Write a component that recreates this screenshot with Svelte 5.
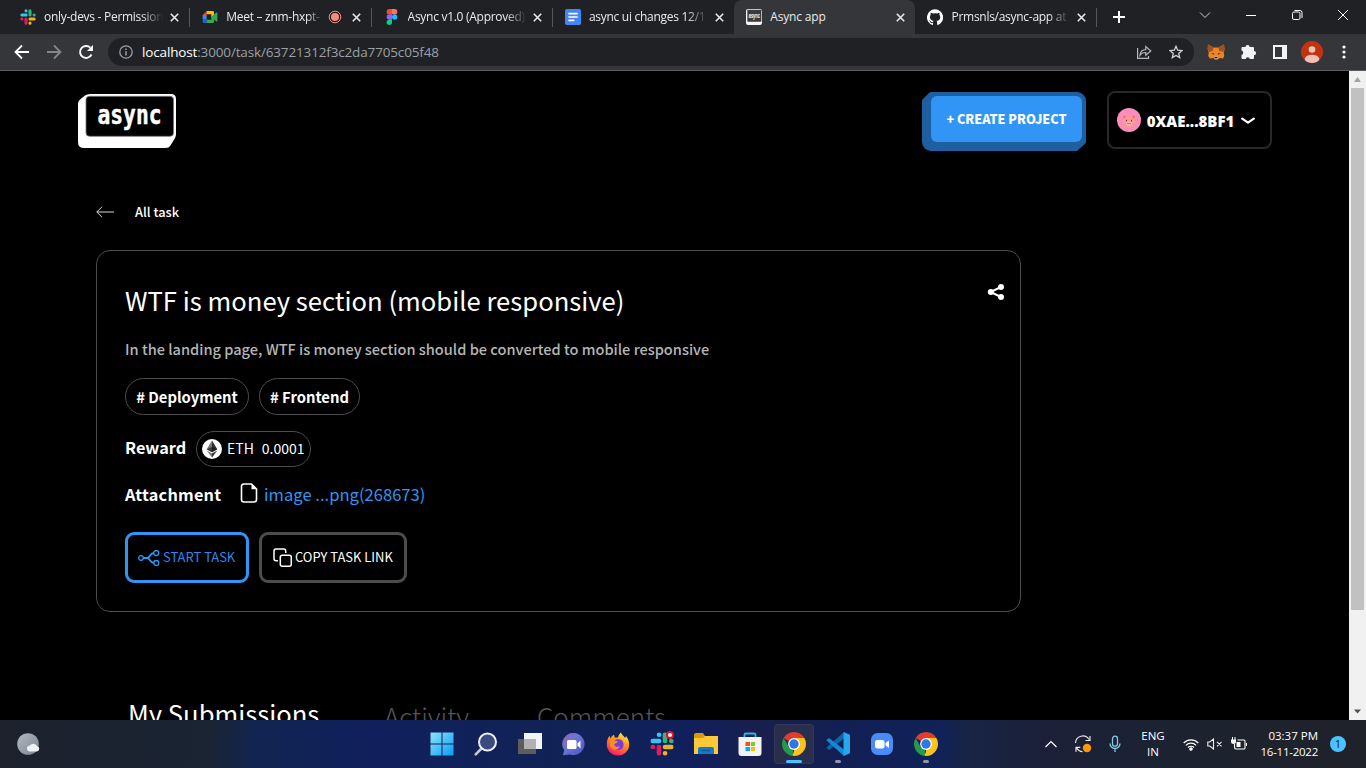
<script>
  const tabs = [
    { icon: 'slack', title: 'only-devs - Permission' },
    { icon: 'meet', title: 'Meet – znm-hxpt-', rec: true },
    { icon: 'figma', title: 'Async v1.0 (Approved)' },
    { icon: 'docs', title: 'async ui changes 12/1' },
    { icon: 'async', title: 'Async app', active: true },
    { icon: 'github', title: 'Prmsnls/async-app at' }
  ];
  const apps = ['windows', 'search', 'taskview', 'chat', 'firefox', 'slack', 'folder', 'store', 'chrome', 'vscode', 'zoom', 'chrome'];
  const state = { 8: 'current', 9: 'open', 11: 'open' };
</script>

{#snippet icon(name, size)}
  <svg width={size} height={size} viewBox="0 0 24 24" fill="none">
    {#if name === 'slack'}
      <g stroke-width="4.6" stroke-linecap="round">
        <path d="M9 2.8h.1M2.8 9h6.3" stroke="#36c5f0" />
        <path d="M15 2.8V9M21.2 9h.1" stroke="#2eb67d" />
        <path d="M15 21.2h.1M15 15h6.2" stroke="#ecb22e" />
        <path d="M9 15v6.2M2.8 15h.1" stroke="#e01e5a" />
      </g>
    {:else if name === 'meet'}
      <path d="M1 9 7 3v6z" fill="#ea4335" />
      <path d="M7 3h9a2 2 0 0 1 2 2v5l-4 3V8H7z" fill="#fbbc04" />
      <path d="M1 9h6v7H1z" fill="#4285f4" />
      <path d="M1 16h6v5H3a2 2 0 0 1-2-2z" fill="#1967d2" />
      <path d="M7 16h7v-4l4-2v9a2 2 0 0 1-2 2H7zM14 12l7-6.5q2-1.2 2 .8v11.4q0 2-2 .8z" fill="#34a853" />
    {:else if name === 'figma'}
      <path d="M12 0H8a4 4 0 0 0 0 8h4z" fill="#f24e1e" />
      <path d="M12 0h4a4 4 0 0 1 0 8h-4z" fill="#ff7262" />
      <path d="M12 8H8a4 4 0 0 0 0 8h4z" fill="#a259ff" />
      <circle cx="16" cy="12" r="4" fill="#1abcfe" />
      <path d="M12 16H8a4 4 0 1 0 4 4z" fill="#0acf83" />
    {:else if name === 'docs'}
      <rect width="24" height="24" rx="2.5" fill="#4285f4" />
      <path d="M5 7h14M5 12h14M5 17h9" stroke="#fff" stroke-width="2.4" />
    {:else if name === 'async'}
      <rect x="0" y="0" width="24" height="24" rx="3" fill="#f5f5f5" />
      <rect x="2" y="1" width="21" height="18" rx="1" fill="#3a3a3d" />
      <text x="12.5" y="13.5" text-anchor="middle" textLength="17" lengthAdjust="spacingAndGlyphs" font-family="Liberation Sans" font-weight="700" font-size="10" fill="#fff">async</text>
    {:else if name === 'github'}
      <path fill="#fff" d="M12 .5a12 12 0 0 0-3.8 23.4c.6.1.8-.3.8-.6v-2.2c-3.3.7-4-1.4-4-1.4-.6-1.4-1.4-1.8-1.4-1.8-1-.7.1-.7.1-.7 1.2.1 1.9 1.2 1.9 1.2 1 1.8 2.8 1.3 3.5 1 .1-.8.4-1.3.8-1.6-2.7-.3-5.5-1.3-5.5-6 0-1.200.5-2.300 1.300-3.100-.2-.4-.6-1.600 0-3.200 0 0 1-.3 3.400 1.200a11.500 11.500 0 0 1 6 0c2.300-1.500 3.300-1.200 3.300-1.200.7 1.600.2 2.800.1 3.200.8.8 1.300 1.900 1.300 3.200 0 4.600-2.800 5.600-5.500 5.900.5.4.9 1.100.9 2.200v3.300c0 .3.200.7.8.6A12 12 0 0 0 12 .5z" />
    {:else if name === 'windows'}
      <defs><linearGradient id="wg" x1="0" y1="0" x2="1" y2="1"><stop stop-color="#8be4fb" /><stop offset="1" stop-color="#0a9cf5" /></linearGradient></defs>
      <path fill="url(#wg)" d="M.5.5h11v11H.5zM12.500.5h11v11h-11zM.5 12.500h11v11H.5zM12.500 12.500h11v11h-11z" />
    {:else if name === 'search'}
      <path d="m7.500 16.500-5.800 5.800" stroke="#c3cad6" stroke-width="2.600" stroke-linecap="round" />
      <circle cx="13.500" cy="10" r="8.500" fill="#3d4a80" stroke="#eceff3" stroke-width="2" />
    {:else if name === 'taskview'}
      <rect x="0" y="7" width="18" height="15" fill="#5d5d60" />
      <rect x="6" y="1" width="18" height="16" fill="#f4f4f4" />
      <rect x="6" y="7" width="12" height="10" fill="#b2b2b4" />
    {:else if name === 'chat'}
      <defs><linearGradient id="cg" x1="0" y1="0" x2="1" y2="1"><stop stop-color="#9c5fa8" /><stop offset=".4" stop-color="#6b76d4" /><stop offset="1" stop-color="#4f52c4" /></linearGradient></defs>
      <path d="M12 1a11 11 0 1 1-4 21.400L.8 23.300l1.500-5A11 11 0 0 1 12 1z" fill="url(#cg)" />
      <rect x="5" y="8" width="9.500" height="9" rx="1.500" fill="#fff" /><path d="m15.500 11.500 3-3v8l-3-3z" fill="#fff" />
    {:else if name === 'firefox'}
      <defs>
        <linearGradient id="fg" x1=".8" y1="0" x2=".3" y2="1"><stop stop-color="#fff44f" /><stop offset=".4" stop-color="#ff9a20" /><stop offset="1" stop-color="#f5156c" /></linearGradient>
      </defs>
      <path d="M12 23.500C5.500 23.500.8 18.500.8 12.500c0-3.500 1-6.500 2.700-8.700l1 2.700C5.500 4.800 6.200 3.500 8 2.800l.8 3 3.200-.3c.5-2 1.500-4 3-5 .8 2.500 3 3.500 4.200 5.500l.8-2c2 2.500 3.200 5 3.200 8.500 0 6-4.700 11-11.200 11z" fill="url(#fg)" />
      <circle cx="12" cy="12.500" r="5.600" fill="#7a3ce0" />
      <path d="M4 9c3-2 5-1 8 .5-1 2-3 1.500-4 3 1 2.500 4 3 6 1.500-1.500 4.500-7 5-9.500 1C3.500 13 3.500 11 4 9z" fill="#ff8a1e" />
    {:else if name === 'folder'}
      <path d="M0 3q0-2 2-2h7l2 3v4H0z" fill="#d99a0a" />
      <path d="M0 6h9l2-2h13v18H0z" fill="#fcc938" />
      <path d="M4 22v-5q0-2 2-2h12q2 0 2 2v5z" fill="#1579c8" /><path d="M8 18.500h8" stroke="#0b5794" stroke-width="1.200" />
    {:else if name === 'store'}
      <path d="M6.500 6V2.500Q6.500 1.500 8 1.500h8q1.500 0 1.500 1V6" stroke="#2bb5ee" stroke-width="1.800" />
      <path d="M.5 5h23v16q0 3-3 3h-17q-3 0-3-3z" fill="#f3f3f3" />
      <path d="M7.500 10H12v4H7.500z" fill="#f1511b" /><path d="M12.800 10H17v4h-4.200z" fill="#80cc28" /><path d="M7.500 15H12v4H7.500z" fill="#00adef" /><path d="M12.800 15H17v4h-4.200z" fill="#fbbc09" />
    {:else if name === 'chrome'}
      <path d="M12 12 1.610 6A12 12 0 0 1 22.390 6z" fill="#e33b2e" />
      <path d="M12 12V6h10.390A12 12 0 0 1 12 24z" fill="#fcc31e" />
      <path d="M1.610 6 6.800 15l4 2.800L12 24A12 12 0 0 1 1.610 6z" fill="#269a4b" />
      <path d="m17.200 15-5.200 9-1.500-1L14 16z" fill="#fcc31e" />
      <circle cx="12" cy="12" r="5.900" fill="#fff" /><circle cx="12" cy="12" r="4.700" fill="#2b78e8" />
    {:else if name === 'vscode'}
      <path d="M18 0v6.500L3 18 .3 15.700z" fill="#0b67ad" />
      <path d="M18 24v-6.500L3 6 .3 8.300z" fill="#1389d3" />
      <path d="m17.500 0 6.500 2.700v18.600L17.500 24z" fill="#27a5ee" />
    {:else if name === 'zoom'}
      <rect x="1" y="1" width="22" height="22" rx="6.500" fill="#4a8cf7" />
      <rect x="5" y="8" width="9.500" height="8.500" rx="2.200" fill="#fff" /><path d="m15.500 11 3.500-2.500v7.500l-3.500-2.500z" fill="#fff" />
    {/if}
  </svg>
{/snippet}

{#snippet cross()}
  <svg class="x" width="9" height="9" viewBox="0 0 9 9"><path d="m.8.8 7.400 7.400M8.200.8.8 8.200" stroke="#e8eaed" stroke-width="1.600" /></svg>
{/snippet}

<div class="screen">
  <div class="tabstrip">
    {#each tabs as t}
      <div class="tab" class:active={t.active}>
        {@render icon(t.icon, 16)}
        <span class="tabtitle" class:plain={t.active}>{t.title}</span>
        {#if t.rec}
          <svg class="rec" width="14" height="14" viewBox="0 0 14 14" fill="none"><circle cx="7" cy="7" r="5.800" stroke="#f28b82" stroke-width="1" /><circle cx="7" cy="7" r="4" fill="#f28b82" /></svg>
        {/if}
        {@render cross()}
      </div>
    {/each}
    <svg class="plus" width="12" height="12" viewBox="0 0 12 12"><path d="M6 0v12M0 6h12" stroke="#fff" stroke-width="2" /></svg>
    <div class="winctl">
      <svg width="12" height="12" viewBox="0 0 12 12" fill="none" stroke="#d0d0d2"><path d="m1 3.500 5 5 5-5" /></svg>
      <svg width="12" height="12" viewBox="0 0 12 12" stroke="#fff"><path d="M1 6.500h10" /></svg>
      <svg width="12" height="12" viewBox="0 0 12 12" fill="none" stroke="#fff"><rect x="1.500" y="3" width="7.500" height="7.500" rx="1.500" /><path d="M3.500 1.500H9Q11 1.500 11 3.500V9" /></svg>
      <svg width="12" height="12" viewBox="0 0 12 12" stroke="#fff"><path d="m1 1 10 10M11 1 1 11" /></svg>
    </div>
  </div>

  <div class="toolbar">
    <svg width="16" height="16" viewBox="0 0 16 16" fill="none" stroke="#fff" stroke-width="1.800"><path d="M15 8H2M8 1.500 1.500 8 8 14.500" /></svg>
    <svg width="16" height="16" viewBox="0 0 16 16" fill="none" stroke="#85868a" stroke-width="1.800"><path d="M1 8h13M8 1.500 14.500 8 8 14.500" /></svg>
    <svg width="16" height="16" viewBox="0 0 16 16" fill="none"><path d="M13.500 10.500A6 6 0 1 1 12.300 3.700" stroke="#fff" stroke-width="1.900" /><path d="M15 1v6H9z" fill="#fff" /></svg>
    <div class="omnibox">
      <svg width="14" height="14" viewBox="0 0 14 14" fill="none" stroke="#9aa0a6" stroke-width="1.300"><circle cx="7" cy="7" r="6.200" /><path d="M7 6.200v4.300M7 3.500v1.400" stroke-width="1.500" /></svg>
      <span class="url"><b>localhost</b>:3000/task/63721312f3c2da7705c05f48</span>
      <svg class="share" width="16" height="16" viewBox="0 0 16 16" fill="none" stroke="#b5b8bc" stroke-width="1.200"><path d="M1.600 4v10.400H12.500V12M4 11.200c.4-3.600 2.500-5.400 5.800-5.500V2.500L14.800 7 9.800 11.300V8.500C7.500 8.400 5.600 9 4 11.200z" /></svg>
      <svg width="14" height="14" viewBox="0 0 14 14" fill="none" stroke="#cfd1d4" stroke-width="1.300"><path d="m7 1.300 1.700 3.900 4.200.4-3.200 2.800 1 4.200L7 10.400l-3.700 2.200 1-4.200L1.100 5.600l4.200-.4z" /></svg>
    </div>
    <div class="exts">
      <svg width="18" height="16" viewBox="0 0 18 16"><path d="m1 .5 5.500 3h5l5.500-3 .5 5-.8 3.500.6 3-1.300 2.500-3.500-.5-1.600 1.500H8.100l-1.600-1.500-3.500.5L1.200 12l.6-3L.8 5.500z" fill="#ee8422" /><path d="m1 .5 5.500 3-.8 3.500-3.900 1L.5 5zM17 .5l-5.500 3 .8 3.500 3.900 1L17.500 5z" fill="#9c5322" /><path d="m4.500 9 2.800.3-.8 1.500zM13.500 9l-2.800.3.8 1.500z" fill="#233447" /><path d="m7 13.200.6-.7h2.800l.6.7-.4 2H7.400z" fill="#c0ad9e" /><path d="M7.700 13h2.600v1.200H7.700z" fill="#161616" /></svg>
      <svg width="16" height="16" viewBox="0 0 16 16"><path d="M4.500 3a2 2 0 0 1 4.200 0H12q1 0 1 1v3.100a2 2 0 0 1 0 4.200V14q0 1-1 1H8.900a2.200 2.200 0 0 0-4.300 0H1.500q-1 0-1-1v-3.100a2.200 2.200 0 0 0 0-4.300V4q0-1 1-1z" fill="#f1f3f4" /></svg>
      <svg width="14" height="14" viewBox="0 0 14 14"><path fill-rule="evenodd" d="M0 0h14v14H0zM2 2v10h7V2z" fill="#f1f3f4" /></svg>
      <svg width="22" height="22" viewBox="0 0 22 22"><defs><clipPath id="av"><circle cx="11" cy="11" r="11" /></clipPath></defs><g clip-path="url(#av)"><rect width="22" height="22" fill="#c1340f" /><circle cx="11" cy="8.500" r="3.300" fill="#ecc2b6" /><ellipse cx="11" cy="18" rx="7.300" ry="4.300" fill="#ecc2b6" /></g></svg>
      <svg width="4" height="14" viewBox="0 0 4 14" fill="#fff"><circle cx="2" cy="2" r="1.600" /><circle cx="2" cy="7" r="1.600" /><circle cx="2" cy="12" r="1.600" /></svg>
    </div>
  </div>

  <div class="viewport">
    <main class="page">
      <header>
        <svg class="logo" width="98" height="54" viewBox="0 0 98 54">
          <path d="M12 0h81q5 0 5 5v35q0 2-1 4l-4.500 7.500Q91 54 87.500 54H6q-6 0-6-6V10q0-3 2-4.500L7 1.500Q9 0 12 0z" fill="#fff" />
          <rect x="8" y="2.300" width="87.500" height="40" rx="3.500" fill="#000" stroke="#777" stroke-width=".8" />
          <text x="19.500" y="30" textLength="64" lengthAdjust="spacingAndGlyphs" font-family="DejaVu Sans Mono" font-weight="700" font-size="26" fill="#fff" stroke="#fff" stroke-width=".5" stroke-linejoin="round">async</text>
        </svg>
        <button class="create"><span>+ CREATE PROJECT</span></button>
        <button class="wallet">
          <svg width="24" height="24" viewBox="0 0 24 24"><circle cx="12" cy="12" r="12" fill="#fd8cba" /><path d="m6 7.500 4 .8h4l4-.8.300 3-1 6q-2 3-5.300 3t-5.300-3l-1-6z" fill="#fa9a95" /><path d="m6 7.500 3.500 1L6.500 11zM18 7.500l-3.500 1 3 2.500z" fill="#e8776f" /><ellipse cx="12" cy="15.500" rx="2.800" ry="2" fill="#ffb8ac" /><path d="M9.500 11.800v1.600M14.500 11.800v1.600M11 15v1M13 15v1" stroke="#7b2f3a" stroke-width="1" /></svg>
          <span>0XAE...8BF1</span>
          <svg class="caret" width="14" height="8" viewBox="0 0 14 8" fill="none"><path d="m1.200 1.700 5.800 4 5.800-4" stroke="#fff" stroke-width="2.200" stroke-linecap="round" stroke-linejoin="round" /></svg>
        </button>
      </header>

      <div class="back">
        <svg width="18" height="12" viewBox="0 0 18 12" fill="none" stroke="#d8d8d8"><path d="M18 6H.8M6 .8.8 6 6 11.200" /></svg>
        <span>All task</span>
      </div>

      <section class="card">
        <div class="headline">
          <h1>WTF is money section (mobile responsive)</h1>
          <svg width="18" height="18" viewBox="0 0 18 18" fill="#fff"><path d="m14 4-10.500 5 10.500 5" fill="none" stroke="#fff" stroke-width="2" /><circle cx="14" cy="4" r="3" /><circle cx="3.800" cy="9" r="3" /><circle cx="14" cy="14" r="3" /></svg>
        </div>
        <p>In the landing page, WTF is money section should be converted to mobile responsive</p>
        <div class="tags"><span class="t1">#&nbsp;Deployment</span><span class="t2">#&nbsp;Frontend</span></div>
        <div class="reward">
          <strong>Reward</strong>
          <div class="pill">
            <svg width="20" height="20" viewBox="0 0 20 20"><circle cx="10" cy="10" r="10" fill="#fff" /><path d="m10 1.500-5.300 8.700L10 13.300z" fill="#777" /><path d="m10 1.500 5.300 8.700-5.300 3.100z" fill="#303030" /><path d="m4.700 11.400 5.300 7.200v-4.200z" fill="#777" /><path d="m15.300 11.400-5.300 7.200v-4.200z" fill="#303030" /><path d="m10 8-5.300 2.300L10 13.300l5.300-3z" fill="#171717" opacity=".65" /></svg>
            <span>ETH</span><span class="amount">0.0001</span>
          </div>
        </div>
        <div class="attachment">
          <strong>Attachment</strong>
          <svg width="18" height="20" viewBox="0 0 18 20" fill="none"><path d="M11.500 1H4Q1.500 1 1.500 3.500v13Q1.500 19 4 19h10q2.500 0 2.500-2.500V6z" stroke="#fff" stroke-width="1.600" stroke-linejoin="round" /><path d="M11.500 1 16.500 6.300h-5z" fill="#fff" /></svg>
          <a href="#file">image ...png(268673)</a>
        </div>
        <div class="actions">
          <button class="start">
            <svg width="22" height="16" viewBox="0 0 22 16" fill="none" stroke="#3197f6" stroke-width="1.300"><circle cx="3" cy="8" r="2.300" /><circle cx="18.300" cy="3" r="2.500" /><circle cx="18.300" cy="13" r="2.500" /><path d="M5.300 8h4c2.500 0 3-5 6.500-5M9.300 8c2.500 0 3 5 6.500 5" stroke-width="1.800" /></svg>
            <span>START TASK</span>
          </button>
          <button class="copy">
            <svg width="20" height="20" viewBox="0 0 20 20" fill="none" stroke="#fff" stroke-width="1.500"><rect x="7.300" y="7.300" width="11" height="11" rx="2" /><path d="M5 12.700H3Q1 12.700 1 10.700V3q0-2 2-2h7.700q2 0 2 2v2" /></svg>
            <span>COPY TASK LINK</span>
          </button>
        </div>
      </section>

      <nav>
        <span class="mine">My Submissions</span><span class="act">Activity</span><span class="com">Comments</span>
      </nav>
    </main>
    <div class="scroll">
      <svg width="17" height="17" viewBox="0 0 17 17"><path d="m8.500 6 3.500 5H5z" fill="#a3a3a3" /></svg>
      <div class="thumb"></div>
      <svg width="17" height="17" viewBox="0 0 17 17"><path d="m8.500 10.500 3.500-4H5z" fill="#505050" /></svg>
    </div>
  </div>

  <footer>
    <svg class="weather" width="24" height="24" viewBox="0 0 24 24"><defs><linearGradient id="mn" x1="0" y1="0" x2="1" y2="1"><stop stop-color="#b3bac4" /><stop offset="1" stop-color="#7b8490" /></linearGradient></defs><circle cx="11" cy="12" r="10.800" fill="url(#mn)" /><path d="M13 19.500a3 3 0 0 1 0-6 4 4 0 0 1 7 .5 2.800 2.800 0 0 1 0 5.500z" fill="#eef1f5" /></svg>
    <div class="apps">
      {#each apps as a, i}
        <div class="app {state[i] ?? ''}">
          {@render icon(a, 24)}
          {#if i === 5}<i class="dot"></i>{/if}
        </div>
      {/each}
    </div>
    <div class="tray">
      <svg class="up" width="12" height="8" viewBox="0 0 12 8" fill="none" stroke="#fff" stroke-width="1.200"><path d="m.5 7 5.500-5.500L11.500 7" /></svg>
      <svg class="sync" width="18" height="18" viewBox="0 0 18 18" fill="none" stroke="#e6e6e6" stroke-width="1.200"><path d="M1.500 8A7.300 7.300 0 0 1 15 4.500M16 1v4.500h-4.500M2 16.800v-4.500h4.300M2.500 12.500q2 4 6 4.200" /><circle cx="13" cy="13" r="4.200" fill="#ff9808" stroke="none" /></svg>
      <svg class="mic" width="12" height="18" viewBox="0 0 12 18" fill="none" stroke="#7dcde0" stroke-width="1.300"><rect x="3.500" y="1.200" width="5" height="10" rx="2.500" /><path d="M1 8.500a5 5 0 0 0 10 0M6 13.500V17" /></svg>
      <div class="lang"><span>ENG</span><span>IN</span></div>
      <svg class="wifi" width="16" height="13" viewBox="0 0 16 13" fill="none" stroke="#fff" stroke-width="1.200"><path d="M.7 5a10 10 0 0 1 14.600 0M2.900 7.300a7 7 0 0 1 10.200 0M5 9.500a4.200 4.200 0 0 1 6 0" /><circle cx="8" cy="11" r="1.200" fill="#fff" /></svg>
      <svg class="spk" width="16" height="12" viewBox="0 0 16 12" fill="none" stroke="#eee" stroke-width="1.100"><path d="M.8 4v4h2L6.500 11V1L2.800 4zM10 3.800l4.500 4.500M14.500 3.800 10 8.300" /></svg>
      <svg class="bat" width="16" height="14" viewBox="0 0 16 14" fill="none" stroke="#fff" stroke-width="1.100"><path d="M6.500 3H13Q14 3 14 4v7q0 1-1 1H5q-1.500 0-1.500-2V7" /><path d="M15.500 6v3" /><path d="M5.500 5h4v5h-4z" fill="#fff" stroke="none" /><path d="M0 2.500h5V5Q5 7 2.500 7T0 5zM1 0h1v2.500H1zM3.500 0h1v2.500h-1z" fill="#fff" stroke="none" /></svg>
      <div class="clock"><span>03:37 PM</span><span class="date">16-11-2022</span></div>
      <span class="badge">1</span>
    </div>
  </footer>
</div>

<style>
  :global(body) { margin: 0; background: #000; overflow: hidden; }
  .screen { width: 1366px; height: 768px; display: flex; flex-direction: column; overflow: hidden; background: #000; font-family: "Open Sans", sans-serif; color: #fff; }
  svg { display: block; flex: none; }
  span, strong, a, h1, p { white-space: nowrap; }
  button { font: inherit; color: inherit; background: none; border: 0; padding: 0; margin: 0; box-sizing: border-box; }

  .tabstrip { height: 34px; flex: none; box-sizing: border-box; background: #202124; display: flex; align-items: center; padding-left: 9px; }
  .tab { width: 181.3px; height: 34px; box-sizing: border-box; padding: 0 11px; display: flex; align-items: center; position: relative; flex: none; }
  .tab:nth-child(n+2) { padding-left: 12px; padding-right: 10.500px; }
  .tab::after { content: ""; position: absolute; right: 0; top: 8px; width: 1px; height: 19px; background: #54565a; }
  .tab:nth-child(4)::after, .active::after { display: none; }
  .active { background: #35363a; border-radius: 8px 8px 0 0; }
  .tabtitle { margin-left: 8px; width: 119px; flex: 0 1 119px; overflow: hidden; font-size: 12px; letter-spacing: -0.28px; color: #e8eaed; line-height: 18px; mask-image: linear-gradient(90deg, #000 82%, transparent); }
  .plain { mask-image: none; letter-spacing: -0.15px; }
  .rec { margin: 0 10px 0 4px; }
  .x { margin-left: auto; }
  .plus { margin-left: 16px; }
  .winctl { margin-left: auto; display: flex; gap: 34px; padding-right: 17px; margin-top: -5px; }

  .toolbar { height: 37px; flex: none; box-sizing: border-box; background: #35363a; border-bottom: 1px solid #5b5c60; display: flex; align-items: center; padding-left: 14px; gap: 16px; }
  .omnibox { margin-left: -2px; width: 1086px; height: 28px; border-radius: 14px; background: #202124; display: flex; align-items: center; padding: 0 11px; box-sizing: border-box; flex: none; }
  .url { margin-left: 9px; font-size: 13.500px; letter-spacing: -0.15px; color: #9aa0a6; }
  .url b { font-weight: 400; color: #fff; }
  .share { margin-left: auto; margin-right: 17px; }
  .exts { display: flex; align-items: center; gap: 16px; margin-left: -3px; }
  .exts svg:nth-child(4) { margin-left: -2px; }
  .exts svg:nth-child(5) { margin-left: 3px; }

  .viewport { height: 649px; flex: none; display: flex; overflow: hidden; }
  .page { width: 1349px; box-sizing: border-box; font-family: "Noto Sans CJK SC", sans-serif; overflow: hidden; }
  header { display: flex; align-items: flex-start; padding: 20px 77px 0 78px; }
  .logo { margin-top: 3px; }
  .create { display: flex; align-items: flex-start; margin: 1px 0 0 auto; width: 164px; height: 59px; background: #1d5fa0; border-radius: 9px; clip-path: polygon(8px 0, 100% 0, 100% 51px, 155px 100%, 0 100%, 0 8px); padding: 4px 4px 0 9px; }
  .create span { flex: 1; display: flex; align-items: center; justify-content: center; height: 46px; border-radius: 6px; background: #3095f4; font-weight: 900; font-size: 12.600px; line-height: 18px; box-sizing: border-box; padding-bottom: 1px; }
  .wallet { margin-left: 21px; width: 165px; height: 58px; border: 2px solid #27272c; border-radius: 8px; display: flex; align-items: center; padding-left: 8px; }
  .wallet span { font-family: "Open Sans", sans-serif; font-weight: 800; font-size: 15px; margin: 2px 6px 0 5px; width: 89px; }
  .caret { margin-top: 2px; }
  .back { display: flex; align-items: center; gap: 21px; padding: 51px 0 0 96px; height: 20px; font-size: 12.800px; line-height: 20px; font-weight: 500; }
  .card { margin: 28px 0 0 96px; width: 925px; height: 362px; box-sizing: border-box; border: 1px solid #4c4c4c; border-radius: 14px; padding: 29px 15px 0 28px; }
  .headline { display: flex; justify-content: space-between; }
  .headline svg { margin-top: 3px; }
  h1 { margin: 0; font-size: 25.630px; font-weight: 400; line-height: 40px; }
  p { margin: 18px 0 0; font-size: 14.580px; line-height: 22px; font-weight: 500; color: #b5b5b5; }
  .tags { display: flex; gap: 10px; margin-top: 18px; }
  .tags span { height: 37px; box-sizing: border-box; border: 1px solid #4c4c4c; border-radius: 19px; display: flex; align-items: center; justify-content: center; font-size: 14.800px; font-weight: 700; padding-bottom: 1px; }
  .t1 { width: 124px; }
  .t2 { width: 101px; }
  .reward { display: flex; align-items: center; margin-top: 16px; height: 36px; }
  strong { font-size: 16.300px; line-height: 28px; font-weight: 700; }
  .reward strong { width: 71px; margin-top: -4px; }
  .pill { width: 115px; height: 36px; box-sizing: border-box; border: 1px solid #4c4c4c; border-radius: 18px; display: flex; align-items: center; padding-left: 5px; font-size: 14px; }
  .pill span { margin: -3px 0 0 5px; }
  .pill .amount { margin-left: 8px; }
  .attachment { display: flex; align-items: center; margin-top: 13px; height: 28px; }
  .attachment strong { width: 115px; letter-spacing: 0.22px; }
  .attachment svg { margin-top: -2px; }
  a { margin-left: 6px; color: #3095f4; text-decoration: none; font-size: 16.600px; line-height: 28px; }
  .actions { display: flex; gap: 10px; margin-top: 24px; }
  .actions button { height: 51px; border: 3px solid #4c4c4c; border-radius: 9px; display: flex; align-items: center; font-size: 12.950px; padding-left: 10px; }
  .actions span { margin-top: -2px; }
  .actions .start { width: 124px; border-color: #3095f4; color: #2f86f0; }
  .start span { margin-left: 3px; }
  .actions .copy { width: 148px; padding-left: 11px; }
  .copy span { margin-left: 2px; }
  nav { display: flex; padding: 85px 0 0 128px; line-height: 32px; align-items: flex-start; }
  .mine { width: 257px; font-size: 25.600px; }
  .act, .com { font-size: 26px; font-weight: 300; color: #55565a; margin-top: 3px; }
  .act { width: 152px; margin-left: -1px; margin-right: 1px; }

  .scroll { width: 17px; background: #f1f1f1; display: flex; flex-direction: column; }
  .thumb { flex: none; height: 522px; margin: 0 2px auto; background: #c1c1c1; }

  footer { height: 48px; flex: none; box-sizing: border-box; display: flex; align-items: center; padding-left: 17px; background: linear-gradient(90deg, #1d222d 0, #1a2433 210px, #122551 255px, #101f5c 370px, #11215a 440px, #102355 560px, #11205c 690px, #191f4c 760px, #111f54 860px, #102258 940px, #192444 970px, #1b2039 1040px, #1c232f 1200px, #20222a 1366px); }
  .weather { margin-right: 379px; }
  .apps { display: flex; }
  .app { width: 40px; height: 40px; margin: 0 2px; border-radius: 4px; display: flex; align-items: center; justify-content: center; position: relative; flex: none; }
  .current { background: #292e4d; box-shadow: inset 0 0 0 1px #323757; }
  .current::after, .open::after { content: ""; position: absolute; bottom: 1px; width: 6px; height: 3px; border-radius: 2px; background: #9298ab; }
  .current::after { width: 16px; background: #4cc2ff; }
  .dot { position: absolute; left: 24px; top: 7px; width: 4px; height: 4px; border: 2px solid #e81123; border-radius: 50%; background: #fff; }
  .tray { margin-left: 97px; display: flex; align-items: center; font-size: 11.500px; }
  .sync { margin-left: 17px; }
  .mic { margin-left: 17px; }
  .lang, .clock { display: flex; flex-direction: column; line-height: 16px; align-items: center; }
  .lang { width: 26px; margin-left: 19px; }
  .wifi { margin-left: 17px; }
  .spk { margin-left: 8px; }
  .bat { margin-left: 8px; }
  .clock { width: 60px; margin-left: 11px; align-items: flex-end; }
  .date { letter-spacing: -0.25px; }
  .badge { margin-left: 12px; width: 16px; height: 16px; border-radius: 50%; background: #4cc2ff; color: #10202c; font-size: 11px; line-height: 16px; text-align: center; }
</style>
